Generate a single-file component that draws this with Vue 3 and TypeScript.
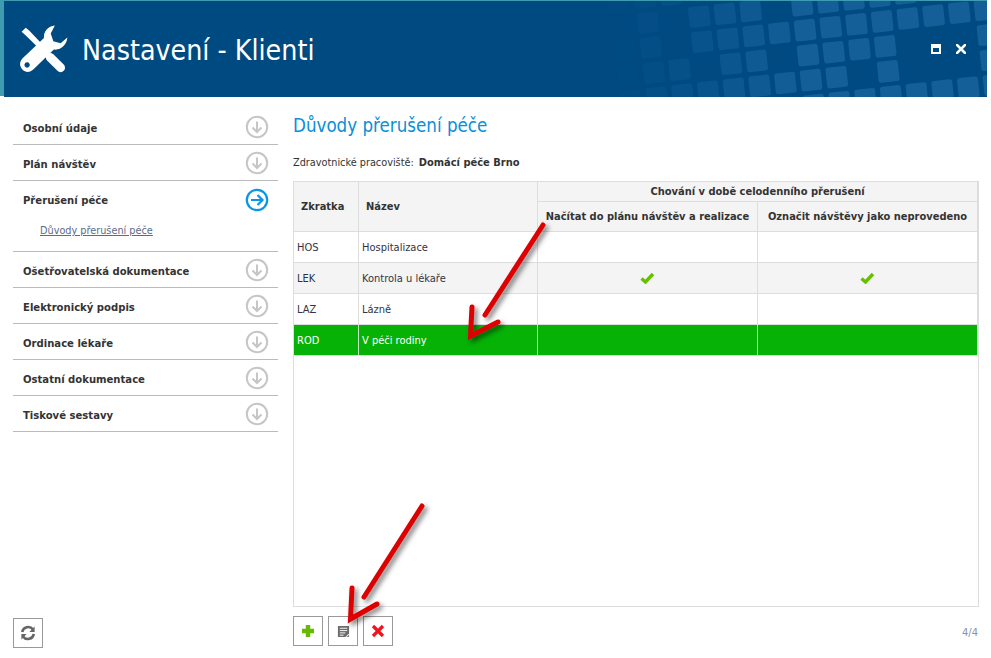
<script setup lang="ts">
interface Row { code: string; name: string; a: boolean; b: boolean; selected?: boolean }

const sectionsTop = ['Osobní údaje', 'Plán návštěv']
const sectionsBottom = ['Ošetřovatelská dokumentace', 'Elektronický podpis', 'Ordinace lékaře', 'Ostatní dokumentace', 'Tiskové sestavy']

const rows: Row[] = [
  { code: 'HOS', name: 'Hospitalizace', a: false, b: false },
  { code: 'LEK', name: 'Kontrola u lékaře', a: true, b: true },
  { code: 'LAZ', name: 'Lázně', a: false, b: false },
  { code: 'ROD', name: 'V péči rodiny', a: false, b: false, selected: true },
]

// Lattice cells [i, j] of the decorative tilted squares in the header
const cells: [number, number][] = [
  [-3, -2], [-2, -2], [-1, -2],
  [-2, -1], [0, -1], [1, -1], [2, -1], [4, -1], [5, -1], [6, -1], [7, -1], [8, -1],
  [-3, 0], [-2, 0], [0, 0], [1, 0], [2, 0], [3, 0], [4, 0], [5, 0], [6, 0], [7, 0], [8, 0], [9, 0], [10, 0], [11, 0],
  [-3, 1], [-2, 1], [-1, 1], [1, 1], [2, 1], [4, 1], [5, 1], [6, 1], [7, 1], [11, 1],
  [-3, 2], [-2, 2], [-1, 2], [0, 2], [1, 2], [2, 2], [3, 2], [4, 2], [5, 2], [7, 2], [11, 2],
  [4, 3], [5, 3], [6, 3], [7, 3], [8, 3], [9, 3], [10, 3], [11, 3],
]

const squares = cells.map(([i, j]) => {
  const x = 702.3 + i * 25.7 + j * 3 - 4
  const y = 41.7 - i * 2.9 + j * 25 - 1
  const opacity = Math.max(0.04, Math.min(1, (x - 610) / 190))
  return { key: `${i}_${j}`, x, y, opacity }
})
</script>

<template>
  <div class="page">
    <header class="head">
      <svg class="pattern" width="983" height="96" viewBox="0 0 983 96" aria-hidden="true">
        <rect
          v-for="s in squares"
          :key="s.key"
          :x="s.x - 10.5"
          :y="s.y - 10.5"
          width="21"
          height="21"
          rx="2.5"
          fill="#145f98"
          :opacity="s.opacity"
          :transform="`rotate(-6 ${s.x} ${s.y})`"
        />
      </svg>
      <svg class="logo" width="52" height="52" viewBox="0 0 50 50" aria-hidden="true">
        <path d="M2.5 8.5 L6.5 4.5 L10 7.5 L30.5 29 L27.5 32.5 L6 11.5 Z" fill="#fff" />
        <path d="M30 33 L40 43" stroke="#fff" stroke-width="8.5" stroke-linecap="round" />
        <path
          fill="#fff"
          fill-rule="evenodd"
          d="M34.5 2.5 C28 3 23.5 8 24 14.5 L3.5 34 C0 37.5 .5 42 3.5 45 C6.5 48 11 47.5 14 44.5 L33.5 25.5 C40 26.5 46 21 46.5 14 L40 19.5 L33 17.5 L30.5 10 Z M7.8 37.8 a2.6 2.6 0 1 0 .01 0 Z"
        />
      </svg>
      <h1 class="app-title">Nastavení - Klienti</h1>
      <div class="win">
        <span class="win-max"></span>
        <svg width="10" height="10" viewBox="0 0 10 10" aria-hidden="true">
          <path d="M1 1 L9 9 M9 1 L1 9" stroke="#fff" stroke-width="2.6" stroke-linecap="square" />
        </svg>
      </div>
    </header>

    <div class="body">
      <aside class="side">
        <nav class="menu">
          <div v-for="s in sectionsTop" :key="s" class="item">
            <span>{{ s }}</span>
            <svg class="circ" width="24" height="24" viewBox="0 0 24 24" aria-hidden="true">
              <circle cx="12" cy="12" r="10.2" fill="none" stroke="#c6c6c6" stroke-width="2" />
              <path d="M12 6.5 V17 M7.5 12.5 L12 17 L16.5 12.5" fill="none" stroke="#c6c6c6" stroke-width="2" />
            </svg>
          </div>
          <div class="group">
            <div class="item plain">
              <span>Přerušení péče</span>
              <svg class="circ" width="24" height="24" viewBox="0 0 24 24" aria-hidden="true">
                <circle cx="12" cy="12" r="10.2" fill="none" stroke="#0a96e6" stroke-width="2.2" />
                <path d="M6 12 H17 M12.5 7 L17.5 12 L12.5 17" fill="none" stroke="#0a96e6" stroke-width="2.2" />
              </svg>
            </div>
            <a class="sub">Důvody přerušení péče</a>
          </div>
          <div v-for="s in sectionsBottom" :key="s" class="item">
            <span>{{ s }}</span>
            <svg class="circ" width="24" height="24" viewBox="0 0 24 24" aria-hidden="true">
              <circle cx="12" cy="12" r="10.2" fill="none" stroke="#c6c6c6" stroke-width="2" />
              <path d="M12 6.5 V17 M7.5 12.5 L12 17 L16.5 12.5" fill="none" stroke="#c6c6c6" stroke-width="2" />
            </svg>
          </div>
        </nav>
        <button class="btn refresh" type="button" aria-label="Obnovit">
          <svg width="18" height="18" viewBox="0 0 18 18" aria-hidden="true">
            <path d="M3.2 8 A6 6 0 0 1 14 5.5" fill="none" stroke="#666" stroke-width="2.6" />
            <path d="M15.6 2.6 V8 H10.4 Z" fill="#666" />
            <path d="M14.8 10 A6 6 0 0 1 4 12.5" fill="none" stroke="#666" stroke-width="2.6" />
            <path d="M2.4 15.4 V10 H7.6 Z" fill="#666" />
          </svg>
        </button>
      </aside>

      <main class="main">
        <h2 class="title">Důvody přerušení péče</h2>
        <p class="place">Zdravotnické pracoviště:<b>Domácí péče Brno</b></p>

        <div class="grid-box">
          <table class="grid">
            <colgroup>
              <col class="c1" /><col class="c2" /><col class="c3" /><col class="c3" />
            </colgroup>
            <thead>
              <tr class="h1">
                <th rowspan="2" class="left">Zkratka</th>
                <th rowspan="2" class="left">Název</th>
                <th colspan="2">Chování v době celodenního přerušení</th>
              </tr>
              <tr class="h2">
                <th>Načítat do plánu návštěv a realizace</th>
                <th>Označit návštěvy jako neprovedeno</th>
              </tr>
            </thead>
            <tbody>
              <tr v-for="r in rows" :key="r.code" :class="{ sel: r.selected }">
                <td>{{ r.code }}</td>
                <td>{{ r.name }}</td>
                <td class="mid">
                  <svg v-if="r.a" width="15" height="12" viewBox="0 0 15 12" aria-hidden="true">
                    <path d="M1.5 6.5 L5.5 10 L13 2" fill="none" stroke="#66c000" stroke-width="3.4" />
                  </svg>
                </td>
                <td class="mid">
                  <svg v-if="r.b" width="15" height="12" viewBox="0 0 15 12" aria-hidden="true">
                    <path d="M1.5 6.5 L5.5 10 L13 2" fill="none" stroke="#66c000" stroke-width="3.4" />
                  </svg>
                </td>
              </tr>
            </tbody>
          </table>
        </div>

        <footer class="tools">
          <button class="btn" type="button" aria-label="Přidat">
            <svg width="14" height="14" viewBox="0 0 14 14" aria-hidden="true">
              <path d="M7 1 V13 M1 7 H13" stroke="#66bb00" stroke-width="4.4" />
            </svg>
          </button>
          <button class="btn" type="button" aria-label="Upravit">
            <svg width="13" height="13" viewBox="0 0 14 14" aria-hidden="true">
              <path d="M1 1 H13 V9 L9 13 H1 Z" fill="#6b6b6b" />
              <path d="M3 3.5 H11 M3 6 H11 M3 8.5 H9 M3 11 H7" stroke="#fff" stroke-width="1" />
              <path d="M10 13 L13 10 V13 Z" fill="#8d8d8d" />
            </svg>
          </button>
          <button class="btn" type="button" aria-label="Smazat">
            <svg width="14" height="14" viewBox="0 0 14 14" aria-hidden="true">
              <path d="M2 2 L12 12 M12 2 L2 12" stroke="#f0141e" stroke-width="3.2" />
            </svg>
          </button>
          <span class="count">4/4</span>
        </footer>
      </main>
    </div>

    <svg class="marks" width="991" height="658" viewBox="0 0 991 658" aria-hidden="true">
      <defs>
        <filter id="sh" x="-30%" y="-30%" width="170%" height="170%">
          <feDropShadow dx="3" dy="3" stdDeviation="2.5" flood-color="#000" flood-opacity=".5" />
        </filter>
      </defs>
      <g filter="url(#sh)" fill="none" stroke="#dd0000" stroke-linecap="round" stroke-linejoin="miter">
        <path d="M543 225 L485 315" stroke-width="5" />
        <path d="M472 307 L470.5 336 L498 322" stroke-width="5" />
        <path d="M422 506 L364 597" stroke-width="5" />
        <path d="M352 588 L350.5 619 L377 604" stroke-width="5" />
      </g>
    </svg>
  </div>
</template>

<style>
html, body { margin: 0; padding: 0; background: #fff; }
</style>

<style scoped>
.page {
  position: relative;
  width: 991px;
  height: 658px;
  display: flex;
  flex-direction: column;
  overflow: hidden;
  background: #fff;
  font-family: "DejaVu Sans Condensed", "DejaVu Sans", sans-serif;
  font-size: 11px;
  color: #333;
}
.head {
  position: relative;
  flex: none;
  height: 96px;
  margin: 1px 4px 0;
  display: flex;
  align-items: center;
  padding-left: 15px;
  background: #004a82;
  box-shadow: -4px -1px 0 #3d9cb0, 0 -1px 0 #3d9cb0;
}
.pattern { position: absolute; left: 0; top: 0; }
.logo { position: relative; flex: none; }
.app-title {
  position: relative;
  margin: 2px 0 0 11px;
  font-size: 28.3px;
  font-weight: 400;
  color: #fff;
}
.win {
  position: absolute;
  left: 927px;
  top: 43px;
  display: flex;
  gap: 15px;
}
.win-max {
  box-sizing: border-box;
  width: 10px;
  height: 10px;
  border: 2px solid #fff;
  border-top-width: 4px;
}
.body { flex: 1; display: flex; min-height: 0; }
.side {
  flex: none;
  width: 265px;
  margin-left: 13px;
  padding: 12px 0 10px;
  box-sizing: border-box;
  display: flex;
  flex-direction: column;
  justify-content: space-between;
}
.item {
  box-sizing: border-box;
  height: 36px;
  display: flex;
  align-items: center;
  justify-content: space-between;
  padding: 3px 9px 0 10px;
  border-bottom: 1px solid #bbb;
  font-weight: 700;
  font-size: 11.2px;
  color: #333;
}
.circ { margin-top: -2px; }
.item.plain { border-bottom: 0; height: 37px; padding-top: 2px; }
.group { box-sizing: border-box; height: 71px; border-bottom: 1px solid #bbb; }
.sub {
  display: block;
  margin: 6px 0 0 27px;
  color: #5c6b8c;
  text-decoration: underline;
  font-size: 10.8px;
}
.btn {
  box-sizing: border-box;
  width: 30px;
  height: 30px;
  padding: 0;
  display: flex;
  align-items: center;
  justify-content: center;
  background: #fff;
  border: 1px solid #999;
}
.main {
  flex: none;
  width: 686px;
  margin-left: 15px;
  display: flex;
  flex-direction: column;
}
.title {
  margin: 17px 0 0;
  height: 24px;
  line-height: 24px;
  font-size: 18.6px;
  font-weight: 400;
  color: #0a8fd8;
}
.place { margin: 18px 0 0; height: 14px; line-height: 14px; font-size: 10.8px; color: #333; }
.place b { margin-left: 5px; font-size: 11px; }
.grid-box {
  box-sizing: border-box;
  height: 426px;
  margin-top: 11px;
  border: 1px solid #ddd;
}
.grid { width: 684px; table-layout: fixed; border-collapse: separate; border-spacing: 0; }
.c1 { width: 65px; }
.c2 { width: 179px; }
.c3 { width: 220px; }
th, td {
  box-sizing: border-box;
  padding: 0 3px;
  border-right: 1px solid #ddd;
  border-bottom: 1px solid #ddd;
  overflow: hidden;
  white-space: nowrap;
}
th { background: #f4f4f4; font-weight: 700; text-align: center; color: #333; }
th.left { text-align: left; padding-left: 7px; }
.h1 { height: 20px; }
.h2 { height: 30px; }
tbody tr { height: 31px; }
td { color: #334; }
tbody tr:nth-child(even) td { background: #f4f4f4; }
.mid { text-align: center; line-height: 0; }
tbody tr.sel td { background: #06b206; color: #fff; border-right-color: #bfe8bf; }
.tools { display: flex; gap: 5px; align-items: center; margin-top: 9px; position: relative; }
.count { position: absolute; right: 1px; top: 10px; color: #8a93a5; font-size: 11px; }
.marks { position: absolute; left: 0; top: 0; pointer-events: none; }
</style>
